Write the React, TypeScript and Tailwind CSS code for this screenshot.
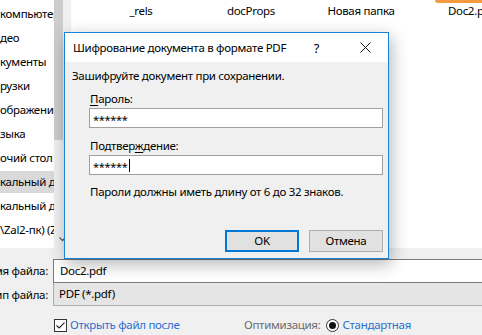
// Save-as dialog (Windows 10 look) with the "encrypt PDF" password prompt
// opened on top of it. The explorer behind is laid out in flow; only the
// modal itself is positioned, since it floats over the file list.
import React from "react";

const NAV_ITEMS = [
  "компьютер",
  "део",
  "кументы",
  "рузки",
  "ображения",
  "зыка",
  "очий стол",
  "кальный диск (C:)",
  "кальный диск (D:)",
  "\\Zal2-пк) (Z:)",
];

const SELECTED_NAV = 7;

const FILES = ["_rels", "docProps", "Новая папка", "Doc2.pdf"];

function NavPane() {
  return (
    <div className="flex w-[54px] shrink-0 flex-col gap-[2px] overflow-hidden pt-[3px]">
      {NAV_ITEMS.map((label, i) => (
        <div
          key={label}
          className={`h-[22px] whitespace-nowrap leading-[22px] ${i === SELECTED_NAV ? "bg-[#d9d9d9]" : ""}`}
        >
          {label}
        </div>
      ))}
    </div>
  );
}

function NavScrollbar() {
  return (
    <div className="flex w-[17px] shrink-0 flex-col bg-[#f0f0f0]">
      <div className="h-[140px] w-[9px] bg-[#cdcdcd]" />
      <div className="flex-1" />
      <div className="flex h-[17px] items-center pl-[5px]">
        <svg width="7" height="5" viewBox="0 0 7 5" fill="none">
          <path d="M0.5 0.5 L3.5 3.5 L6.5 0.5" stroke="#606060" strokeWidth="1.3" />
        </svg>
      </div>
    </div>
  );
}

function FilePane() {
  return (
    <div className="flex flex-1 overflow-hidden bg-white pl-[15px]">
      {FILES.map((name, i) => (
        <div key={name} className="relative w-[110px] shrink-0 pt-[3px] text-center">
          {/* bottom edge of the selected thumbnail's frame */}
          {i === FILES.length - 1 && (
            <div className="absolute left-[19px] top-0 h-[3px] w-[100px] rounded-bl-[3px] bg-[#f59a3f]" />
          )}
          {name}
        </div>
      ))}
    </div>
  );
}

function SaveForm() {
  return (
    <div className="pt-[11px]">
      <div className="flex h-[24px]">
        <div className="flex w-[53px] shrink-0 items-center justify-end overflow-hidden pr-[5px]">
          <span className="shrink-0 whitespace-nowrap">Имя файла:</span>
        </div>
        <div className="-mr-[4px] flex flex-1 items-center border border-[#7a7a7a] bg-white pl-[6px]">
          Doc2.pdf
        </div>
      </div>
      <div className="flex h-[23px]">
        <div className="flex w-[53px] shrink-0 items-center justify-end overflow-hidden pr-[5px]">
          <span className="shrink-0 whitespace-nowrap">Тип файла:</span>
        </div>
        <div className="-mr-[4px] flex flex-1 items-center border border-t-0 border-[#adadad] bg-[#e5e5e5] pl-[5px]">
          PDF (*.pdf)
        </div>
      </div>
      <div className="mt-[11px] flex h-[16px] items-center pl-[54px]">
        <div className="flex w-[190px] shrink-0 items-center">
          <span className="flex h-[13px] w-[13px] items-center justify-center border border-[#333] bg-white">
            <svg width="9" height="7" viewBox="0 0 9 7" fill="none">
              <path d="M0.5 3.5 L3.2 6 L8.5 0.6" stroke="#222" strokeWidth="1.1" />
            </svg>
          </span>
          <span className="ml-[3px] whitespace-nowrap text-[#2b6fcf]">Открыть файл после</span>
        </div>
        <span className="whitespace-nowrap text-[#6d6d6d]">Оптимизация:</span>
        <span className="ml-[5px] flex h-[13px] w-[13px] items-center justify-center rounded-full border border-[#333] bg-white">
          <span className="h-[7px] w-[7px] rounded-full bg-[#111]" />
        </span>
        <span className="ml-[4px] whitespace-nowrap text-[#2b6fcf]">Стандартная</span>
      </div>
    </div>
  );
}

function PasswordField({ value, focused }: { value: string; focused?: boolean }) {
  return (
    <div className="mt-[1px] flex h-[20px] w-[294px] items-center border border-[#a0a0a0] bg-white pl-[3px]">
      <span className="pt-[3px] text-[11px] tracking-[-0.3px]">{value}</span>
      {focused && <span className="ml-[1px] h-[13px] w-[1px] bg-black" />}
    </div>
  );
}

function PdfPasswordDialog() {
  return (
    <div className="absolute left-[64px] top-[32px] flex h-[227px] w-[325px] flex-col border border-[#1883d7] bg-[#f0f0f0] shadow-[2px_5px_16px_rgba(0,0,0,0.3)]">
      <div className="flex h-[29px] shrink-0 items-center bg-white">
        <div className="flex-1 whitespace-nowrap pl-[8px]">Шифрование документа в формате PDF</div>
        <div className="w-[46px] pr-[5px] text-center text-[13px]">?</div>
        <div className="flex w-[46px] items-center justify-center">
          <svg width="11" height="11" viewBox="0 0 11 11" fill="none">
            <path d="M0.5 0.5 L10.5 10.5 M10.5 0.5 L0.5 10.5" stroke="#111" strokeWidth="1" />
          </svg>
        </div>
      </div>

      <div className="flex-1 pl-[7px] pr-[5px] pt-[6px]">
        <p className="whitespace-nowrap">Зашифруйте документ при сохранении.</p>
        <div className="ml-[17px] mt-[7px]">
          <div className="pl-[1px]">
            <span className="underline underline-offset-2">П</span>ароль:
          </div>
          <PasswordField value="******" />
          <div className="mt-[10px] pl-[1px]">
            Подтвер<span className="underline underline-offset-2">ж</span>дение:
          </div>
          <PasswordField value="******" focused />
          <p className="mt-[9px] whitespace-nowrap pl-[1px]">
            Пароли должны иметь длину от 6 до 32 знаков.
          </p>
        </div>
        <div className="mt-[30px] flex justify-end gap-[10px]">
          <button type="button" className="h-[22px] w-[74px] border-2 border-[#0078d7] bg-[#e1e1e1]">
            OK
          </button>
          <button type="button" className="h-[22px] w-[74px] border border-[#adadad] bg-[#e1e1e1]">
            Отмена
          </button>
        </div>
      </div>
    </div>
  );
}

export default function App() {
  return (
    <div className="relative h-[335px] w-[482px] overflow-hidden bg-[#f0f0f0] font-['Noto_Sans',sans-serif] text-[11.5px] leading-[16px] tracking-[-0.3px] text-black">
      <div className="flex h-[248px] bg-white">
        <NavPane />
        <NavScrollbar />
        <FilePane />
      </div>
      <SaveForm />
      <PdfPasswordDialog />
    </div>
  );
}
